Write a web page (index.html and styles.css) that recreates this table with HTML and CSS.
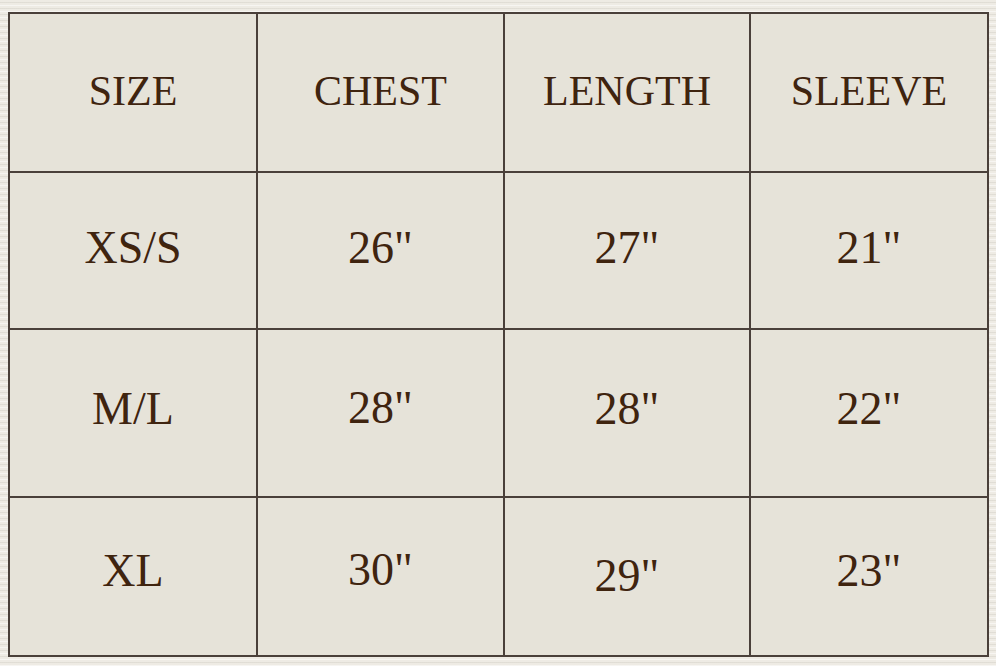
FILE: index.html
```html
<!DOCTYPE html>
<html>
<head>
<meta charset="utf-8">
<link rel="stylesheet" href="styles.css">
</head>
<body>
<div class="chart">
  <div class="cell head">SIZE</div>
  <div class="cell head">CHEST</div>
  <div class="cell head">LENGTH</div>
  <div class="cell head">SLEEVE</div>
  <div class="cell r2">XS/S</div>
  <div class="cell r2">26"</div>
  <div class="cell r2">27"</div>
  <div class="cell r2">21"</div>
  <div class="cell r3">M/L</div>
  <div class="cell r3 up">28"</div>
  <div class="cell r3">28"</div>
  <div class="cell r3">22"</div>
  <div class="cell r4">XL</div>
  <div class="cell r4 up">30"</div>
  <div class="cell r4 low">29"</div>
  <div class="cell r4">23"</div>
</div>
</body>
</html>
```

FILE: styles.css
```css
html, body {
  margin: 0;
  padding: 0;
}
body {
  width: 996px;
  height: 666px;
  overflow: hidden;
  background-color: #eeebe4;
  background-image:
    repeating-linear-gradient(0deg, rgba(255,255,255,0.5) 0 1px, transparent 1px 3px, rgba(200,196,186,0.35) 3px 4px, transparent 4px 6px);
  padding: 12px 0 0 8px;
  box-sizing: border-box;
  font-family: "Liberation Serif", "DejaVu Serif", serif;
}
.chart {
  display: grid;
  grid-template-columns: 246px 245px 244px 236px;
  grid-template-rows: 157px 155px 166px 157px;
  gap: 2px;
  padding: 2px;
  width: 981px;
  box-sizing: border-box;
  background: #4a403a;
}
.cell {
  background: #e6e3d9;
  display: flex;
  align-items: center;
  justify-content: center;
  color: #3f240f;
  font-size: 46px;
}
.head {
  font-size: 42px;
  padding-bottom: 4px;
}
.r2 {
  padding-bottom: 6px;
}
.r3 {
  padding-bottom: 10px;
}
.r3.up {
  padding-bottom: 12px;
}
.r4 {
  padding-bottom: 12px;
}
.r4.up {
  padding-bottom: 14px;
}
.r4.low {
  padding-bottom: 2px;
}
```
